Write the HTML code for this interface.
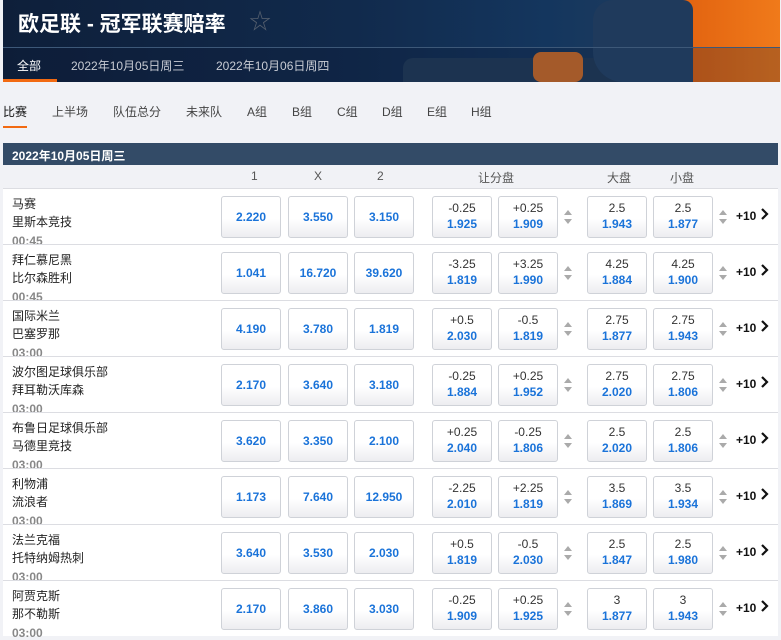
<!DOCTYPE html>
<html><head><meta charset="utf-8"><style>
*{margin:0;padding:0;box-sizing:border-box}
body{width:781px;height:637px;overflow:hidden;background:#f1f2f6;font-family:"Liberation Sans","Noto Sans CJK SC",sans-serif;position:relative}
.hdr{position:absolute;left:3px;top:0;width:777px;height:82px;background:linear-gradient(90deg,#0e1f3a 0%,#112a4c 45%,#14365e 70%,#1b3a5e 80%,#e0600f 86%,#f07a1a 100%);overflow:hidden}
.hdr .line{position:absolute;left:0;top:47px;width:100%;height:1px;background:#3d5878}
.hdr .low{position:absolute;left:0;top:48px;width:100%;height:34px;background:rgba(10,25,50,.25)}
.player{position:absolute;left:590px;top:0;width:100px;height:82px;background:#1f3a5c;border-radius:20px 10px 0 30px}
.leg{position:absolute;left:400px;top:58px;width:230px;height:24px;background:#1c3350;border-radius:10px 10px 0 0}
.shorts{position:absolute;left:530px;top:52px;width:50px;height:30px;background:#a45a2a;border-radius:8px}
.title{position:absolute;left:15px;top:8px;color:#fff;font-size:21px;font-weight:bold}
.star{position:absolute;left:246px;top:4px;color:#555f6e;font-size:22px}
.nav{position:absolute;top:57px;font-size:12px;color:#c8ccd4}
.nav.a{color:#fff}
.ul{position:absolute;left:0;top:79px;width:54px;height:3px;background:#f26a12}
.tab{position:absolute;top:103px;font-size:12px;color:#444}
.tabul{position:absolute;left:3px;top:126px;width:24px;height:2px;background:#f26a12}
.bar{position:absolute;left:3px;top:143px;width:775px;height:22px;background:#334b67;color:#fff;font-size:12px;font-weight:bold;padding:4px 9px}
.colh{position:absolute;top:169px;font-size:12px;color:#555}
.row{position:absolute;left:3px;width:775px;height:56px;background:#fff;border-top:1px solid #dcdde2}
.t{position:absolute;left:9px;font-size:12px;color:#222}
.tm{position:absolute;left:9px;top:45px;font-size:12px;color:#888;font-weight:bold}
.b{position:absolute;top:7px;width:60px;height:42px;border:1px solid #cfd2d8;border-radius:3px;background:linear-gradient(#fff 55%,#ededf0);text-align:center;font-size:12px;color:#1a73d9;font-weight:bold}
.b1{line-height:40px}
.b .u{display:block;color:#333;font-weight:normal;margin-top:4px;line-height:15px}
.b .d{display:block;line-height:17px}
.arr{position:absolute;top:18px;width:10px}
.more{position:absolute;left:733px;top:20px;font-size:12px;font-weight:bold;color:#111}
.chev{position:absolute;left:757px;top:18px}
</style></head><body>
<div class="hdr"><div class="low"></div><div class="leg"></div><div class="shorts"></div><div class="player"></div><div class="line"></div>
<div class="title">欧足联 - 冠军联赛赔率</div><div class="star">☆</div>
<div class="nav a" style="left:14px">全部</div>
<div class="nav" style="left:68px">2022年10月05日周三</div>
<div class="nav" style="left:213px">2022年10月06日周四</div>
<div class="ul"></div></div>
<div class="tab" style="left:3px;color:#111">比赛</div>
<div class="tab" style="left:52px">上半场</div>
<div class="tab" style="left:113px">队伍总分</div>
<div class="tab" style="left:186px">未来队</div>
<div class="tab" style="left:247px">A组</div>
<div class="tab" style="left:292px">B组</div>
<div class="tab" style="left:337px">C组</div>
<div class="tab" style="left:382px">D组</div>
<div class="tab" style="left:427px">E组</div>
<div class="tab" style="left:471px">H组</div>
<div class="tabul"></div>
<div class="bar">2022年10月05日周三</div>
<div class="colh" style="left:251px">1</div>
<div class="colh" style="left:314px">X</div>
<div class="colh" style="left:377px">2</div>
<div class="colh" style="left:478px">让分盘</div>
<div class="colh" style="left:607px">大盘</div>
<div class="colh" style="left:670px">小盘</div>
<div id="rows"></div>
<script>
var d=[["马赛","里斯本竞技","00:45","2.220","3.550","3.150","-0.25","1.925","+0.25","1.909","2.5","1.943","2.5","1.877"],
["拜仁慕尼黑","比尔森胜利","00:45","1.041","16.720","39.620","-3.25","1.819","+3.25","1.990","4.25","1.884","4.25","1.900"],
["国际米兰","巴塞罗那","03:00","4.190","3.780","1.819","+0.5","2.030","-0.5","1.819","2.75","1.877","2.75","1.943"],
["波尔图足球俱乐部","拜耳勒沃库森","03:00","2.170","3.640","3.180","-0.25","1.884","+0.25","1.952","2.75","2.020","2.75","1.806"],
["布鲁日足球俱乐部","马德里竞技","03:00","3.620","3.350","2.100","+0.25","2.040","-0.25","1.806","2.5","2.020","2.5","1.806"],
["利物浦","流浪者","03:00","1.173","7.640","12.950","-2.25","2.010","+2.25","1.819","3.5","1.869","3.5","1.934"],
["法兰克福","托特纳姆热刺","03:00","3.640","3.530","2.030","+0.5","1.819","-0.5","2.030","2.5","1.847","2.5","1.980"],
["阿贾克斯","那不勒斯","03:00","2.170","3.860","3.030","-0.25","1.909","+0.25","1.925","3","1.877","3","1.943"]];
var h="";
var arr='<svg width="10" height="20"><path d="M1 8 L5 3 L9 8Z M1 12 L5 17 L9 12Z" fill="#aaa"/></svg>';
d.forEach(function(r,i){
h+='<div class="row" style="top:'+(188+i*56)+'px"><div class="t" style="top:6px">'+r[0]+'</div><div class="t" style="top:24px">'+r[1]+'</div><div class="tm">'+r[2]+'</div>';
[218,285,351].forEach(function(x,j){h+='<div class="b b1" style="left:'+x+'px">'+r[3+j]+'</div>'});
[429,495,584,650].forEach(function(x,j){h+='<div class="b" style="left:'+x+'px"><span class="u">'+r[6+j*2]+'</span><span class="d">'+r[7+j*2]+'</span></div>'});
h+='<div class="arr" style="left:560px">'+arr+'</div><div class="arr" style="left:715px">'+arr+'</div><div class="more">+10</div><svg class="chev" width="10" height="14"><path d="M2 2 L7 7 L2 12" stroke="#111" stroke-width="2.2" fill="none"/></svg></div>';});
document.getElementById("rows").innerHTML=h;
</script>
</body></html>
